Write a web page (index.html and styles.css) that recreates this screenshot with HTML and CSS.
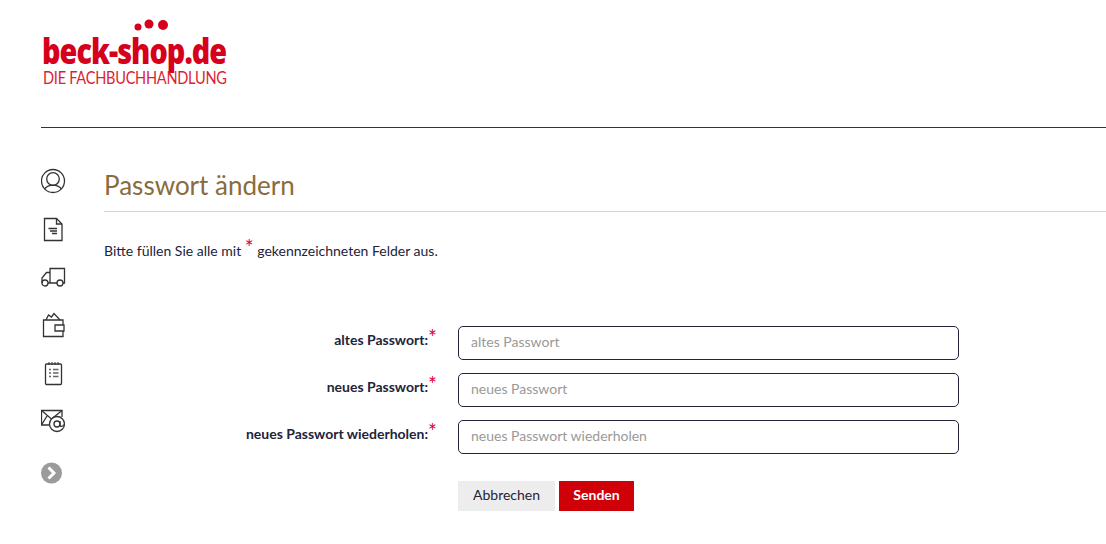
FILE: index.html
```html
<!DOCTYPE html>
<html lang="de">
<head>
    <meta charset="UTF-8">
    <meta name="viewport" content="width=device-width, initial-scale=1.0">
    <title>Passwort ändern</title>
    <link rel="stylesheet" href="styles.css">
</head>
<body>
    <header class="site-header">
        <a class="logo" href="#">
            <svg class="logo-dots" width="60" height="20" viewBox="0 0 60 20">
                <circle cx="8" cy="10" r="3.500"/>
                <circle cx="19" cy="7" r="4.500"/>
                <circle cx="33" cy="8" r="5"/>
            </svg>
            <span class="logo-name">beck-shop.de</span>
            <span class="logo-sub">DIE FACHBUCHHANDLUNG</span>
        </a>
    </header>

    <div class="page">
        <nav class="side-nav">
            <a href="#" class="nav-icon">
                <svg width="26" height="26" viewBox="0 0 26 26" fill="none" stroke="#333" stroke-width="1.300">
                    <circle cx="12" cy="13" r="11.500"/>
                    <circle cx="12" cy="11" r="6.300"/>
                    <path d="M3.500 21c2.500-3 5-3.800 8.500-3.800s6 .8 8.500 3.800"/>
                </svg>
            </a>
            <a href="#" class="nav-icon">
                <svg width="26" height="26" viewBox="0 0 26 26" fill="none" stroke="#333" stroke-width="1.300">
                    <path d="M3.500 2.500h12l5.500 5.500v16.500H3.500z"/>
                    <path d="M15.500 2.500V8H21"/>
                    <path d="M7.500 12.500H16M9 15h7M11 17.500h5" stroke-width="1.500"/>
                </svg>
            </a>
            <a href="#" class="nav-icon">
                <svg width="26" height="26" viewBox="0 0 26 26" fill="none" stroke="#333" stroke-width="1.300">
                    <path d="M7 19h9M22 19h1.500V4.500H9V19"/>
                    <path d="M9 8.500H5.500L1 14v5"/>
                    <circle cx="4" cy="19" r="3"/>
                    <circle cx="19" cy="19" r="3"/>
                </svg>
            </a>
            <a href="#" class="nav-icon">
                <svg width="26" height="26" viewBox="0 0 26 26" fill="none" stroke="#333" stroke-width="1.300">
                    <path d="M22 13V8H2.500v16.500H22V19"/>
                    <path d="M5 8l2.500-5 3 2L13 1.500 19 8"/>
                    <path d="M23 13h-9v6h9z"/>
                </svg>
            </a>
            <a href="#" class="nav-icon">
                <svg width="26" height="26" viewBox="0 0 26 26" fill="none" stroke="#333" stroke-width="1.300">
                    <rect x="4.500" y="4" width="16" height="20.500" rx="1"/>
                    <path d="M8 2v3M11 2v3M14 2v3M17 2v3" stroke-width="1"/>
                    <path d="M8 9.500h2M12 9.500h5.500M8 13h2M12 13h5.500M8 16.500h2M12 16.500h5.500" stroke="#666"/>
                </svg>
            </a>
            <a href="#" class="nav-icon">
                <svg width="26" height="26" viewBox="0 0 26 26" fill="none" stroke="#333" stroke-width="1.300">
                    <path d="M11 17H.5V2.500H21V9"/>
                    <path d="M.5 2.500l10 8.500 10.500-8.500M.5 17L6 8"/>
                    <circle cx="16" cy="16" r="7.500" fill="#fff"/>
                    <circle cx="16" cy="16" r="3"/>
                    <path d="M19 13v4c0 2 3.500 2 3.500-.5"/>
                </svg>
            </a>
            <a href="#" class="nav-icon nav-more">
                <svg width="22" height="22" viewBox="0 0 22 22">
                    <circle cx="10.500" cy="11" r="10.500" fill="#9b9b9b"/>
                    <path d="M7.500 5.500L13 11l-5.500 5.500" fill="none" stroke="#fff" stroke-width="3"/>
                </svg>
            </a>
        </nav>

        <main class="content">
            <h1 class="page-title">Passwort ändern</h1>
            <p class="hint">Bitte füllen Sie alle mit <span class="req req-big">*</span> gekennzeichneten Felder aus.</p>

            <form class="pw-form">
                <div class="form-row">
                    <label class="form-label">altes Passwort:<span class="req">*</span></label>
                    <input class="form-input" type="password" placeholder="altes Passwort">
                </div>
                <div class="form-row">
                    <label class="form-label">neues Passwort:<span class="req">*</span></label>
                    <input class="form-input" type="password" placeholder="neues Passwort">
                </div>
                <div class="form-row">
                    <label class="form-label">neues Passwort wiederholen:<span class="req">*</span></label>
                    <input class="form-input" type="password" placeholder="neues Passwort wiederholen">
                </div>
                <div class="form-actions">
                    <button type="button" class="btn btn-cancel">Abbrechen</button>
                    <button type="submit" class="btn btn-send">Senden</button>
                </div>
            </form>
        </main>
    </div>
</body>
</html>
```

FILE: styles.css
```css
body {
    margin: 0;
    padding-left: 41px;
    height: 544px;
    overflow: hidden;
    background-color: #fff;
    font-family: Lato, sans-serif;
    font-size: 14px;
    color: #23233a;
}
a {
    color: inherit;
    text-decoration: none;
}
.site-header {
    height: 127px;
    border-bottom: 1px solid #333;
}
.logo {
    position: relative;
    display: inline-flex;
    flex-direction: column;
    padding-left: 2px;
    padding-top: 32px;
    color: #d6001c;
}
.logo-dots {
    position: absolute;
    left: 89px;
    top: 17px;
    fill: #d6001c;
}
.logo-name {
    margin-left: -1px;
    font-family: "Open Sans", sans-serif;
    font-weight: 800;
    font-size: 36px;
    line-height: 38px;
    letter-spacing: -1.200px;
    white-space: nowrap;
    transform: scaleX(0.8);
    transform-origin: left;
    width: 184px;
}
.logo-sub {
    font-size: 16.500px;
    line-height: 17px;
    white-space: nowrap;
    letter-spacing: -0.300px;
    color: #dc1e32;
    transform: scaleX(0.883);
    transform-origin: left;
    width: 184px;
}
.page {
    display: flex;
}
.side-nav {
    display: flex;
    flex-direction: column;
    width: 63px;
    padding-top: 40px;
    flex-shrink: 0;
}
.nav-icon {
    display: block;
    height: 48px;
}
.nav-icon svg {
    display: block;
}
.nav-more {
    margin-top: 6px;
}
.content {
    flex: 1;
    min-width: 0;
}
.page-title {
    margin: 0;
    padding-top: 41px;
    height: 42px;
    border-bottom: 1px solid #d2d2d2;
    font-size: 26px;
    line-height: 32px;
    font-weight: 400;
    color: #8a6c3c;
}
.hint {
    margin: 27px 0 0;
    line-height: 24px;
}
.req {
    color: #e2003c;
    font-size: 21px;
    font-weight: 400;
    line-height: 0;
    vertical-align: 0;
}
.req-big {
    vertical-align: 1px;
}
.pw-form {
    margin-top: 63px;
}
.form-row {
    display: flex;
    align-items: center;
    gap: 21px;
    margin-bottom: 13px;
}
.form-label {
    width: 333px;
    text-align: right;
    font-weight: 700;
    white-space: nowrap;
    position: relative;
    top: -4px;
}
.form-input {
    width: 501px;
    height: 34px;
    box-sizing: border-box;
    padding: 0 12px 4px;
    border: 1px solid #23233a;
    border-radius: 5px;
    font-family: inherit;
    font-size: 14px;
}
.form-input::placeholder {
    color: #999;
    opacity: 1;
}
.form-actions {
    display: flex;
    gap: 4px;
    margin: 27px 0 0 354px;
}
.btn {
    height: 30px;
    padding: 0 15px 3px;
    border: none;
    font-family: inherit;
    font-size: 14px;
}
.btn-cancel {
    background-color: #eeeded;
    color: #23233a;
}
.btn-send {
    width: 75px;
    padding: 0 0 3px;
    background-color: #cf0007;
    color: #fff;
    font-weight: 700;
}
```
